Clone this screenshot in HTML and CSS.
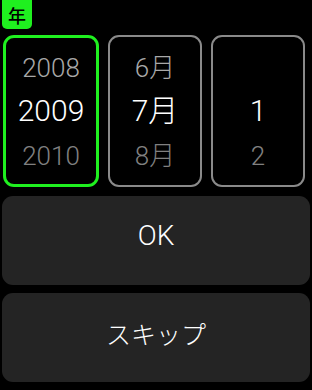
FILE: index.html
```html
<!DOCTYPE html>
<html lang="ja">
<head>
<meta charset="utf-8">
<link rel="stylesheet" href="styles.css">
</head>
<body>
<div class="screen">
  <div class="badge">年</div>
  <div class="pickers">
    <div class="col active">
      <div class="item prev">2008</div>
      <div class="item cur">2009</div>
      <div class="item next">2010</div>
    </div>
    <div class="col">
      <div class="item prev">6月</div>
      <div class="item cur">7月</div>
      <div class="item next">8月</div>
    </div>
    <div class="col">
      <div class="item prev"></div>
      <div class="item cur">1</div>
      <div class="item next">2</div>
    </div>
  </div>
  <div class="btn ok">OK</div>
  <div class="btn skip">スキップ</div>
</div>
</body>
</html>
```
FILE: styles.css
```css
html, body {
  margin: 0;
  padding: 0;
  background: #000;
}
body {
  font-family: Roboto, "Noto Sans CJK JP", sans-serif;
  font-weight: 300;
  color: #fff;
  width: 312px;
  height: 390px;
  overflow: hidden;
}
.screen {
  display: flex;
  flex-direction: column;
}
.badge {
  margin-left: 2px;
  width: 30px;
  height: 29px;
  border-radius: 0 0 5px 5px;
  background: #1ff01f;
  color: #000;
  font-family: "Noto Sans CJK JP", sans-serif;
  font-size: 18px;
  font-weight: 500;
  line-height: 31px;
  text-align: center;
  margin-bottom: 6px;
}
.pickers {
  display: flex;
  gap: 9px;
  padding: 0 7px 0 3px;
  height: 152px;
}
.col {
  flex: 1;
  box-sizing: border-box;
  border: 2px solid #8a8a8a;
  border-radius: 11px;
  padding-top: 8.5px;
  display: flex;
  flex-direction: column;
  align-items: center;
}
.col.active {
  border: 3px solid #1ff01f;
  padding-top: 7.5px;
}
.item {
  height: 44px;
  line-height: 44px;
  text-align: center;
  white-space: nowrap;
}
.item.prev {
  font-size: 26px;
  color: #a8a8a8;
}
.item.cur {
  font-size: 30px;
  color: #fff;
  margin-top: -1px;
}
.item.next {
  font-size: 26px;
  color: #808080;
  margin-top: 1px;
}
.btn {
  margin: 0 2px;
  height: 89px;
  border-radius: 11px;
  background: #242424;
  display: flex;
  align-items: center;
  justify-content: center;
  padding-bottom: 10px;
  box-sizing: border-box;
  color: #fff;
}
.btn.ok {
  margin-top: 9px;
  font-size: 28px;
}
.btn.skip {
  margin-top: 8px;
  font-family: "Noto Sans CJK JP", sans-serif;
  font-size: 25px;
}
```
